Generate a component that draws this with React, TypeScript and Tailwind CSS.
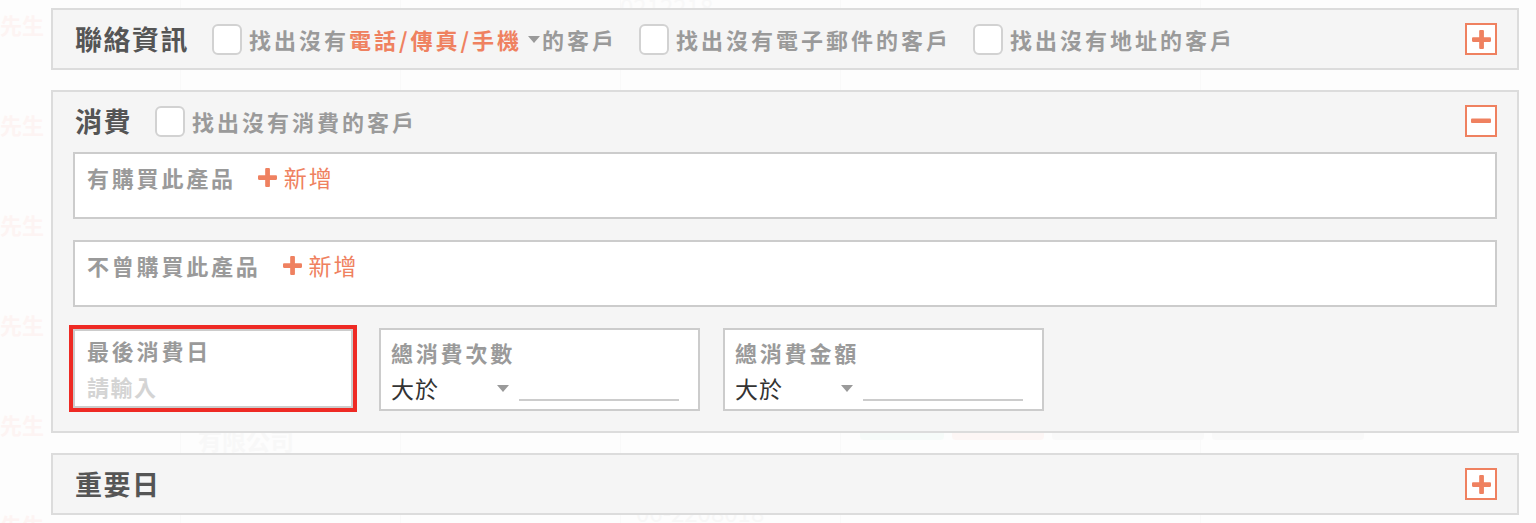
import React from "react"

const orange = "#ef8160"

function PlusGlyph({ size = 18 }: { size?: number }) {
  return (
    <svg width={size} height={size} viewBox="0 0 18 18">
      <rect x="6.8" y="0" width="4.5" height="18" rx="1" fill={orange} />
      <rect x="0" y="6.8" width="18" height="4.5" rx="1" fill={orange} />
    </svg>
  )
}

function ToggleBox({ open }: { open?: boolean }) {
  return (
    <div className="flex h-8 w-8 items-center justify-center border-2 border-[#ef8160] bg-white">
      {open ? (
        <svg width="20" height="6" viewBox="0 0 20 6">
          <rect x="0" y="0.5" width="20" height="4.5" rx="1" fill={orange} />
        </svg>
      ) : (
        <PlusGlyph size={19} />
      )}
    </div>
  )
}

function Check({ children }: { children: React.ReactNode }) {
  return (
    <label className="flex items-center gap-[7px]">
      <span className="h-[31px] w-[30px] rounded-md border-2 border-[#d2d2d2] bg-white" />
      <span className="flex items-center text-[22px] font-bold tracking-[3px] text-[#9a9a9a]">{children}</span>
    </label>
  )
}

function Caret({ className = "" }: { className?: string }) {
  return (
    <svg width="12" height="7" viewBox="0 0 12 7" className={className}>
      <path d="M0 0 H12 L6 7 Z" fill="#9a9a9a" />
    </svg>
  )
}

function Panel({
  title,
  open,
  children,
  extra,
}: {
  title: string
  open?: boolean
  children?: React.ReactNode
  extra?: React.ReactNode
}) {
  return (
    <div className="border-2 border-[#dcdcdc] bg-[#f5f5f5]">
      <div className="flex h-[58px] items-center pl-[22px] pr-5">
        <span className="text-[27px] font-bold tracking-[1.5px] text-[#555]">{title}</span>
        <div className="ml-[23px] flex flex-1 items-center gap-[22px]">{extra}</div>
        <ToggleBox open={open} />
      </div>
      {children}
    </div>
  )
}

function ProductBox({ label }: { label: string }) {
  return (
    <div className="h-[67px] border-2 border-[#cccccc] bg-white pl-3 pt-[8px]">
      <div className="flex items-center text-[22px] leading-[30px]">
        <span className="font-bold tracking-[2.8px] text-[#9a9a9a]">{label}</span>
        <span className="ml-[22px] flex items-center gap-[7px] text-[23px] tracking-[2px] text-[#ef8160]">
          <PlusGlyph size={19} />
          新增
        </span>
      </div>
    </div>
  )
}

function CompareBox({ label }: { label: string }) {
  return (
    <div className="h-[83px] w-[321px] border-2 border-[#cccccc] bg-white pl-[10px] pt-[7px]">
      <div className="text-[22px] font-bold leading-[30px] tracking-[2.8px] text-[#9a9a9a]">{label}</div>
      <div className="mt-[6px] flex items-end">
        <div className="flex w-[128px] items-center">
          <span className="w-[106px] text-[23px] leading-[30px] tracking-[1px] text-[#333]">大於</span>
          <Caret />
        </div>
        <div className="mb-[2px] h-[2px] w-[160px] bg-[#cccccc]" />
      </div>
    </div>
  )
}

function Ghosts() {
  const rows = [0, 1, 2, 3, 4, 5]
  return (
    <div className="pointer-events-none absolute inset-0 select-none">
      {[180, 400, 620, 840, 1200].map((x) => (
        <div key={x} className="absolute top-0 bottom-0 w-px bg-[#f9f9f9]" style={{ left: x }} />
      ))}
      {rows.map((r) => (
        <div
          key={r}
          className="absolute left-0 text-[22px] font-bold text-[#fdf4f3]"
          style={{ top: r * 100 + 8 }}
        >
          先生
        </div>
      ))}
      <div className="absolute left-[620px] top-[-12px] text-[24px] text-[#f8f8f8]">0212218-</div>
      <div className="absolute left-[198px] top-[422px] text-[24px] font-bold text-[#f8f8f8]">有限公司</div>
      <div className="absolute left-[636px] top-[494px] text-[24px] text-[#f7f7f7]">06-2208018</div>
      <div className="absolute left-[860px] top-[418px] flex gap-2">
        <div className="h-[22px] w-[84px] rounded bg-[#f6fbf9]" />
        <div className="h-[22px] w-[92px] rounded bg-[#fdf6f5]" />
        <div className="h-[22px] w-[152px] rounded bg-[#f9f9f9]" />
        <div className="h-[22px] w-[152px] rounded bg-[#f9f9f9]" />
      </div>
    </div>
  )
}

export default function App() {
  return (
    <div className="relative h-[523px] w-[1536px] overflow-hidden bg-[#fdfdfd] font-['Noto_Sans_CJK_TC','Noto_Sans',sans-serif]">
      <Ghosts />
      <div className="relative flex w-[1519px] flex-col gap-5 pl-[51px] pt-2">
        <Panel
          title="聯絡資訊"
          extra={
            <>
              <Check>
                找出沒有
                <span className="text-[#ef8160]">電話/傳真/手機</span>
                <Caret className="ml-[6px] mr-[2px]" />
                的客戶
              </Check>
              <Check>找出沒有電子郵件的客戶</Check>
              <Check>找出沒有地址的客戶</Check>
            </>
          }
        />
        <Panel title="消費" open extra={<Check>找出沒有消費的客戶</Check>}>
          <div className="flex flex-col px-5 pb-5 pt-[2px]">
            <ProductBox label="有購買此產品" />
            <div className="mt-[21px]">
              <ProductBox label="不曾購買此產品" />
            </div>
            <div className="mt-[21px] flex items-start">
              <div className="mt-px h-[79px] w-[280px] border-2 border-[#cccccc] bg-white pl-3 pt-[4px] outline-4 outline-[#ee2a24]">
                <div className="text-[22px] font-bold leading-[30px] tracking-[2.8px] text-[#9a9a9a]">最後消費日</div>
                <div className="mt-[6px] text-[22px] font-bold leading-[30px] tracking-[1.5px] text-[#d4d4d4]">請輸入</div>
              </div>
              <div className="ml-[26px]">
                <CompareBox label="總消費次數" />
              </div>
              <div className="ml-[23px]">
                <CompareBox label="總消費金額" />
              </div>
            </div>
          </div>
        </Panel>
        <Panel title="重要日" />
      </div>
    </div>
  )
}
